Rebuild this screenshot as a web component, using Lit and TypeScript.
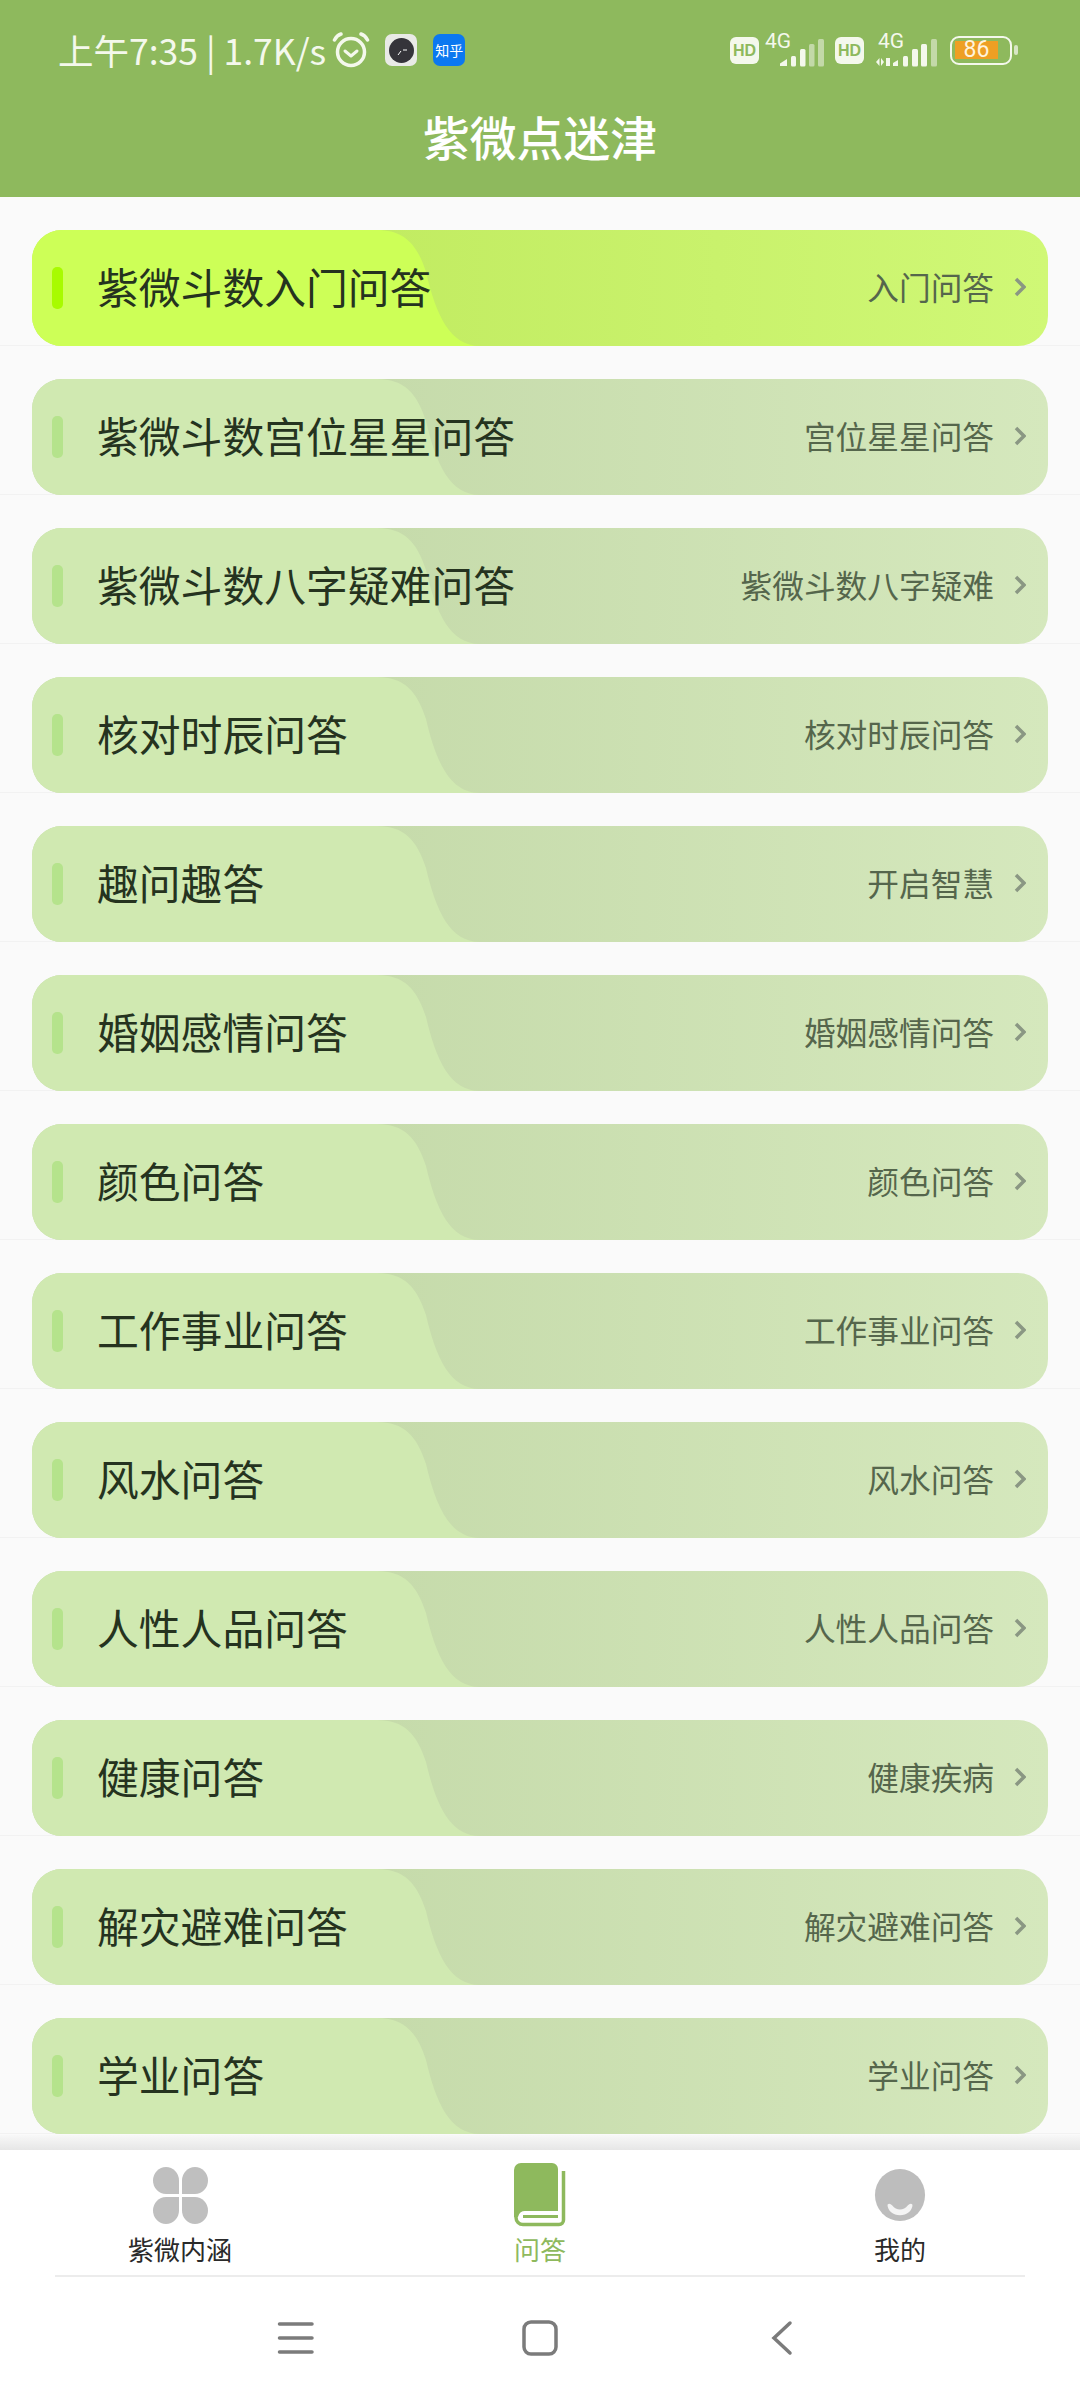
import { LitElement, html, css, svg } from "lit";
import { customElement } from "lit/decorators.js";

const rows: [string, string][] = [
  ["紫微斗数入门问答", "入门问答"],
  ["紫微斗数宫位星星问答", "宫位星星问答"],
  ["紫微斗数八字疑难问答", "紫微斗数八字疑难"],
  ["核对时辰问答", "核对时辰问答"],
  ["趣问趣答", "开启智慧"],
  ["婚姻感情问答", "婚姻感情问答"],
  ["颜色问答", "颜色问答"],
  ["工作事业问答", "工作事业问答"],
  ["风水问答", "风水问答"],
  ["人性人品问答", "人性人品问答"],
  ["健康问答", "健康疾病"],
  ["解灾避难问答", "解灾避难问答"],
  ["学业问答", "学业问答"],
];

const ON = "#f4f8ec";
const OFF = "#c3d9a8";

const signal1 = svg`
  <svg class="sig s1" width="60" height="40" viewBox="0 0 60 40">
    <text x="0" y="18" class="g4">4G</text>
    <path d="M15 36v-2.500l7-4.500v7z" fill="${ON}"/>
    <rect x="26" y="26" width="5" height="10.500" rx="1.500" fill="${ON}"/>
    <rect x="35" y="19" width="5.500" height="17.500" rx="1.500" fill="${ON}"/>
    <rect x="44" y="14" width="5.500" height="22.500" rx="1.500" fill="${OFF}"/>
    <rect x="53" y="9" width="6" height="27.500" rx="1.500" fill="${OFF}"/>
  </svg>`;

const signal2 = svg`
  <svg class="sig s2" width="62" height="40" viewBox="0 0 62 40">
    <text x="2" y="18" class="g4">4G</text>
    <path d="M0 32l3.500-4v8zM5 28l3 4-3 4zM10 28h4v8h-4zM17 36v-3l5-3v6z" fill="${ON}"/>
    <rect x="27" y="26" width="5" height="10.500" rx="1.500" fill="${ON}"/>
    <rect x="36" y="19" width="6" height="17.500" rx="1.500" fill="${ON}"/>
    <rect x="45" y="14" width="6" height="22.500" rx="1.500" fill="${ON}"/>
    <rect x="55" y="9" width="6" height="27.500" rx="1.500" fill="${OFF}"/>
  </svg>`;

@customElement("app-root")
export class AppRoot extends LitElement {
  static styles = css`
    :host { display: block; width: 1080px; height: 2400px; overflow: hidden; font-family: "Noto Sans CJK SC", "Noto Sans", sans-serif; background: #fff; }
    .page { display: flex; flex-direction: column; height: 2400px; }
    header { height: 197px; background: #8eb95d; display: flex; flex-direction: column; flex: none; }
    .status { height: 100px; flex: none; display: flex; align-items: center; justify-content: space-between; padding: 0 62px 0 58px; color: #f4f8ec; box-sizing: border-box; }
    .st-left, .st-right { display: flex; align-items: center; }
    .clock { font-size: 35.500px; line-height: 44px; white-space: nowrap; }
    .alarm { margin-left: 6px; }
    .clockapp { margin-left: 15px; width: 32px; height: 32px; border-radius: 7px; background: #e9eae6; display: flex; align-items: center; justify-content: center; }
    .zhihu { margin-left: 16px; width: 32px; height: 32px; border-radius: 7px; background: #0b78f0; color: #fff; font-size: 14px; line-height: 32px; text-align: center; white-space: nowrap; }
    .hd { width: 29px; height: 27px; border-radius: 6px; background: #f4f8ec; color: #8eb95d; font: bold 16px/27px "Liberation Sans", sans-serif; text-align: center; }
    .sig { overflow: visible; }
    .s1 { margin-left: 6px; margin-right: 10px; }
    .s2 { margin-left: 12px; }
    .g4 { font: 21px "Roboto", sans-serif; fill: #f4f8ec; }
    .batt { margin-left: 12px; width: 62px; height: 29px; border: 2.500px solid #f4f8ec; border-radius: 9px; box-sizing: border-box; padding: 3px 3px; }
    .fill { width: 43px; height: 18px; background: #ee9f24; color: #fff3dc; font: 23px/18px "Roboto", sans-serif; text-align: center; }
    .nub { width: 4px; height: 10px; border-radius: 2px; background: #d8e6c6; margin-left: 2px; }
    .title { text-align: center; color: #fff; font-size: 46.800px; font-weight: 500; line-height: 78px; margin-top: -3px; }
    main { flex: 1; min-height: 0; background: #fafafa; overflow: hidden; }
    .row { height: 149px; box-sizing: border-box; padding: 33px 32px 0 32px; border-bottom: 1px solid #f2f2f2; }
    .card { height: 116px; border-radius: 30px; overflow: hidden; position: relative; display: flex; align-items: center; background: linear-gradient(90deg, #c6dbab 0%, #c6dbab 35%, #d5e8bd 100%); }
    .card.on { background: linear-gradient(90deg, #c2ec62 0%, #c2ec62 35%, #d0f876 100%); }
    .shape { position: absolute; inset: 0; width: 100%; height: 100%; }
    .bar { position: relative; margin-left: 20px; width: 11px; height: 42px; border-radius: 5px; background: #b5e38c; flex: none; }
    .on .bar { background: #a8fb00; }
    .name { position: relative; margin-left: 34px; padding-bottom: 5px; font-size: 41.800px; line-height: 58px; color: #25331f; white-space: nowrap; flex: 1; }
    .desc { position: relative; font-size: 31.700px; line-height: 44px; padding-bottom: 5px; color: #55664c; white-space: nowrap; }
    .chev { position: relative; margin: 0 22px 2px 20px; flex: none; }
    footer { flex: none; height: 250px; background: #fff; position: relative; display: flex; flex-direction: column; }
    .shade { height: 15px; margin-top: -15px; background: linear-gradient(#f8f8f8, #e6e6e6); position: relative; flex: none; }
    .tabs { height: 125px; display: grid; grid-template-columns: 1fr 1fr 1fr; flex: none; }
    .tab { display: flex; flex-direction: column; align-items: center; }
    .ico { height: 66px; margin-top: 12px; display: flex; align-items: center; justify-content: center; }
    .lab { font-size: 26px; line-height: 34px; margin-top: 4px; color: #2a2a2a; white-space: nowrap; }
    .tab.on .lab { color: #8eb95d; }
    .rule { height: 2px; margin: 0 55px; background: #ececec; flex: none; }
    .nav { display: block; flex: none; }
  `;

  render() {
    return html`<div class="page">
      <header>
        <div class="status">
          <div class="st-left">
            <span class="clock">上午7:35 | 1.7K/s</span>
            <svg class="alarm" width="38" height="36" viewBox="0 0 38 36" fill="none" stroke="#f4f8ec">
              <circle cx="19" cy="20" r="13.500" stroke-width="3.500"/>
              <path d="M13 19l6 5 6-5" stroke-width="3" stroke-linecap="round" stroke-linejoin="round"/>
              <path d="M2.500 8C4 5 6 3 9 2M35.500 8C34 5 32 3 29 2" stroke-width="3.500" stroke-linecap="round"/>
            </svg>
            <div class="clockapp">
              <svg width="25" height="25" viewBox="0 0 25 25"><circle cx="12.500" cy="12.500" r="12.500" fill="#35343a"/><path d="M9 17l3-4M14 12h4" stroke="#fff" stroke-width="1"/></svg>
            </div>
            <div class="zhihu">知乎</div>
          </div>
          <div class="st-right">
            <div class="hd">HD</div>${signal1}
            <div class="hd">HD</div>${signal2}
            <div class="batt"><div class="fill">86</div></div>
            <div class="nub"></div>
          </div>
        </div>
        <div class="title">紫微点迷津</div>
      </header>
      <main>
        ${rows.map(([a, b], i) => html`<div class="row">
          <div class="card ${i === 0 ? "on" : ""}">
            <svg class="shape" viewBox="0 0 1016 116" preserveAspectRatio="none">
              <path d="M0 0H345C372 0 385 14 394 42C404 85 418 116 448 116H0Z" fill="${i === 0 ? "#cdff57" : "#d0e9b1"}"/>
            </svg>
            <div class="bar"></div>
            <div class="name">${a}</div>
            <div class="desc">${b}</div>
            <svg class="chev" width="12" height="20" viewBox="0 0 12 20" fill="none"><path d="M2 2l8 8-8 8" stroke="#8a9783" stroke-width="3.500"/></svg>
          </div>
        </div>`)}
      </main>
      <footer>
        <div class="shade"></div>
        <div class="tabs">
          <div class="tab">
            <div class="ico"><svg width="55" height="57" viewBox="0 0 55 57" fill="#bfbfbf">
              <path d="M26 13.500A13 13.500 0 1 0 13 27H26Z"/>
              <path d="M29 13.500A13 13.500 0 1 1 42 27H29Z"/>
              <path d="M26 43.500A13 13.500 0 1 1 13 30H26Z"/>
              <path d="M29 43.500A13 13.500 0 1 0 42 30H29Z"/>
            </svg></div>
            <div class="lab">紫微内涵</div>
          </div>
          <div class="tab on">
            <div class="ico"><svg width="52" height="64" viewBox="0 0 52 64">
              <path d="M7 0H38a6 6 0 0 1 6 6V48H12A7 7 0 0 0 4 54H0V7a7 7 0 0 1 7-7Z" fill="#8eb95d"/>
              <path d="M49.500 8V57a4.500 4.500 0 0 1-4.500 4.500H9A7 7 0 0 1 2 54.500V46" fill="none" stroke="#8eb95d" stroke-width="3.500"/>
              <path d="M9 53.500H44" stroke="#8eb95d" stroke-width="3"/>
            </svg></div>
            <div class="lab">问答</div>
          </div>
          <div class="tab">
            <div class="ico"><svg width="52" height="52" viewBox="0 0 52 54">
              <ellipse cx="26" cy="27" rx="26" ry="27" fill="#bdbdbd"/>
              <path d="M13 37C15 35 17 37 18 38C20 41 23 42 26 42C29 42 32 41 34 38C35 37 37 35 39 37C39 43 33 48 26 48C19 48 13 43 13 37Z" fill="#f4f4f4"/>
            </svg></div>
            <div class="lab">我的</div>
          </div>
        </div>
        <div class="rule"></div>
        <svg class="nav" width="1080" height="123" viewBox="0 0 1080 123" fill="none" stroke="#7b7b7b" stroke-linecap="round">
          <path d="M279.500 47H312M279.500 61H312M279.500 75H312" stroke-width="3.500"/>
          <rect x="524" y="45" width="32" height="32" rx="7" stroke-width="3.500"/>
          <path d="M790 46L774 61L790 76" stroke-width="3.500"/>
        </svg>
      </footer>
    </div>`;
  }
}
